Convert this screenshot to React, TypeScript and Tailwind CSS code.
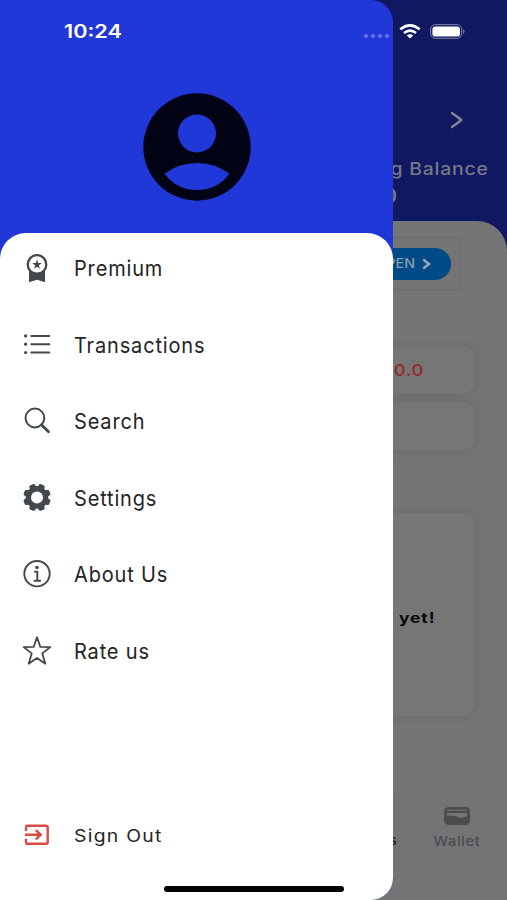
import type { ReactNode } from 'react';

const PremiumIcon = () => (
  <svg viewBox="0 0 30 30" className="w-[30px] h-[30px]">
    <path d="M7 17v12.2l8-2.4 8 2.4V17z" fill="#42484b" />
    <circle cx="15" cy="11.4" r="9.3" fill="#fff" stroke="#42484b" strokeWidth="2.3" />
    <path d="M15 6.6l1.2 3.4 3.6.05-2.9 2.2 1 3.45L15 13.7l-2.9 2 1-3.45-2.9-2.2 3.6-.05z" fill="#42484b" />
  </svg>
);

const ListIcon = () => (
  <svg viewBox="0 0 30 30" className="w-[30px] h-[30px]" fill="#42484b">
    {[5.9, 14.2, 22.5].map((y) => (
      <g key={y}>
        <circle cx="3.6" cy={y} r="1.6" />
        <rect x="8.3" y={y - 1} width="20" height="2" rx="1" />
      </g>
    ))}
  </svg>
);

const SearchIcon = () => (
  <svg viewBox="0 0 30 30" className="w-[30px] h-[30px]" fill="none" stroke="#42484b">
    <circle cx="12.9" cy="12" r="9.4" strokeWidth="2" />
    <path d="M19.5 18.8l7 7" strokeWidth="2.8" strokeLinecap="round" />
  </svg>
);

const GearIcon = () => (
  <svg viewBox="0 0 30 30" className="w-[30px] h-[30px]">
    <g fill="#42484b">
      {[22.5, 67.5, 112.5, 157.5].map((a) => (
        <rect key={a} x="11.8" y=".6" width="6.4" height="27.6" rx="1.9" transform={`rotate(${a} 15 14.4)`} />
      ))}
      <circle cx="15" cy="14.4" r="11.3" />
    </g>
    <circle cx="15" cy="14.4" r="6" fill="#fff" />
  </svg>
);

const InfoIcon = () => (
  <svg viewBox="0 0 30 30" className="w-[30px] h-[30px]" fill="none" stroke="#42484b">
    <circle cx="15" cy="14.7" r="12.7" strokeWidth="1.9" />
    <path d="M12.3 12.7h3v8.7M11.7 21.7h7.2" strokeWidth="1.9" />
    <circle cx="15" cy="8.5" r="1.8" fill="#42484b" stroke="none" />
  </svg>
);

const StarIcon = () => (
  <svg viewBox="0 0 30 30" className="w-[30px] h-[30px]" fill="none" stroke="#42484b" strokeWidth="1.8" strokeLinejoin="round">
    <path d="M15 1.2l3.3 9.7 10 .2-8 6.3 3 10.3L15 22l-8.3 5.7 3-10.3-8-6.3 10-.2z" />
  </svg>
);

const ExitIcon = () => (
  <svg viewBox="0 0 30 30" className="w-[30px] h-[30px]" fill="none" stroke="#db4a43" strokeWidth="2.4">
    <path d="M4 11V7.4q0-1.6 1.6-1.6h18.2q1.9 0 1.9 1.6v14.8q0 1.6-1.9 1.6H5.6Q4 23.8 4 22.2v-3.4" />
    <path d="M3 14.8h15.5M13.8 10.2l5 4.6-5 4.6" />
  </svg>
);

const WalletIcon = () => (
  <svg viewBox="0 0 26 18" className="w-[26px] h-[18px]">
    <rect width="26" height="18" rx="4.5" fill="#4b4c4d" />
    <path d="M3 4q0-1.4 1.5-1.4h17q1.5 0 1.5 1.4z" fill="#68696b" />
    <path d="M3 6h20v3.6q-2.2 0-4 .9-2.2 1-5-.5T9 8.8q-4-.4-6-.3z" fill="#727476" />
  </svg>
);

const menu: { label: string; icon: ReactNode }[] = [
  { label: 'Premium', icon: <PremiumIcon /> },
  { label: 'Transactions', icon: <ListIcon /> },
  { label: 'Search', icon: <SearchIcon /> },
  { label: 'Settings', icon: <GearIcon /> },
  { label: 'About Us', icon: <InfoIcon /> },
  { label: 'Rate us', icon: <StarIcon /> },
];

function StatusBar() {
  return (
    <div className="absolute inset-x-0 top-0 h-[62px] pl-[64px] pr-[41px] flex items-center justify-between text-white">
      <span className="text-[18px] font-semibold origin-left scale-x-[1.2] pt-px">10:24</span>
      <div className="flex items-center">
        <div className="flex gap-[3px] pt-[10px] mr-[10px]">
          {[0, 1, 2, 3].map((i) => <span key={i} className="w-1 h-1 rounded-full bg-[#6574e5]" />)}
        </div>
        <svg viewBox="0 0 22 15" className="w-[22px] h-[15px] mr-[9px]" fill="none" stroke="#fff" strokeWidth="2.6">
          <path d="M1.3 5.3Q11-2.5 20.7 5.3M5 9q6-4.8 12 0" />
          <path d="M7.8 11.6q3.2-2.5 6.4 0L11 14.6z" fill="#fff" stroke="none" />
        </svg>
        <svg viewBox="0 0 36 15" className="w-[36px] h-[15px]">
          <rect x=".7" y=".7" width="31" height="13.6" rx="4.5" fill="none" stroke="#8185ad" strokeWidth="1" />
          <rect x="2.4" y="2.4" width="27.6" height="10.2" rx="3.2" fill="#fff" />
          <path d="M33.2 5q2.6 2.5 0 5z" fill="#8185ad" />
        </svg>
      </div>
    </div>
  );
}

function HomePage() {
  return (
    <div className="h-full flex flex-col bg-[#111862]">
      <div className="h-[221px] shrink-0 flex flex-col items-end pt-[107px] pr-[19px]">
        <svg viewBox="0 0 14 18" className="w-[14px] h-[18px] mt-1 mr-[24px]" fill="none" stroke="#85868f" strokeWidth="2.4" strokeLinecap="round" strokeLinejoin="round">
          <path d="M2 2l9.5 7L2 16" />
        </svg>
        <div className="mt-[28px] -mr-px h-6 leading-6 text-[17px] font-medium tracking-[0.7px] text-[#777986] whitespace-nowrap origin-right scale-x-[1.14]">Opening Balance</div>
        <div className="mt-px mr-[91px] h-7 leading-7 text-[20px] font-semibold text-[#777986]">0.0</div>
      </div>
      <div className="flex-1 flex flex-col rounded-t-[30px] bg-[#757575]">
        <div className="mt-[16px] ml-8 mr-[47px] h-[53px] flex items-center justify-end pr-[8px] border border-[#6b6c70]">
          <div className="h-[32px] w-[110px] rounded-full bg-[#004b87] flex items-center justify-end pr-[20px] gap-[7px] text-[#8a9aaa]">
            <span className="text-[13px] font-medium origin-right scale-x-[1.1]">OPEN</span>
            <svg viewBox="0 0 9 12" className="w-[9px] h-[12px]" fill="none" stroke="#9aa5b0" strokeWidth="2.6">
              <path d="M1.2 1.5L7 6l-5.8 4.5" />
            </svg>
          </div>
        </div>
        <div className="mt-[57px] mx-8 h-[46px] rounded-xl bg-[#767676] shadow-[0_0_8px_3px_rgba(0,0,0,0.06)] flex items-center justify-end pt-px pr-[51px]">
          <span className="text-[15.5px] font-semibold tracking-[0.5px] text-[#91302f] origin-right scale-x-[1.16]">0.0</span>
        </div>
        <div className="mt-[10px] mx-8 h-[47px] rounded-xl bg-[#767676] shadow-[0_0_8px_3px_rgba(0,0,0,0.06)]" />
        <div className="mt-[63px] mx-8 h-[203px] rounded-xl bg-[#767676] shadow-[0_0_8px_3px_rgba(0,0,0,0.06)] flex items-center justify-end pt-[7px] pr-[39px]">
          <span className="text-[14.5px] font-bold tracking-[0.8px] text-[#090909] origin-right scale-x-[1.2]">yet!</span>
        </div>
        <div className="mt-auto h-[108px] bg-[#727476] flex justify-end pr-[29px] text-[13px] font-medium tracking-[0.6px]">
          <div className="flex flex-col justify-start pt-[39px] mr-[39px] text-[#151515]">
            <span className="leading-[18px]">Reports</span>
          </div>
          <div className="flex flex-col items-center pt-[15px] text-[#4b4c4d]">
            <WalletIcon />
            <span className="mt-[7px] leading-[18px] origin-center scale-x-[1.12]">Wallet</span>
          </div>
        </div>
      </div>
    </div>
  );
}

function Drawer() {
  return (
    <div className="absolute inset-y-0 left-0 w-[392.5px] rounded-r-[22px] overflow-hidden bg-[#2138d8] flex flex-col">
      <div className="h-[233px] shrink-0 pl-[143px] pt-[93px]">
        <svg viewBox="0 0 108 108" className="w-[108px] h-[108px]">
          <circle cx="54" cy="54" r="53.7" fill="#020416" />
          <circle cx="54" cy="40.5" r="19" fill="#2138d8" />
          <path d="M21.5 80.8Q36 70 54 70t32.5 10.8Q74 97 54 97T21.5 80.8z" fill="#2138d8" />
        </svg>
      </div>
      <div className="flex-1 rounded-t-[26px] bg-white flex flex-col text-[#242526]">
        {menu.map((item) => (
          <div key={item.label} className="h-[76.5px] shrink-0 flex items-start pt-[20px] pl-[22px]">
            {item.icon}
            <span className="ml-[21.5px] h-[30px] leading-[30px] text-[21.5px] tracking-[0.9px] origin-left scale-x-[0.93]">{item.label}</span>
          </div>
        ))}
        <div className="mt-auto mb-[50px] flex items-center pl-[22px]">
          <ExitIcon />
          <span className="ml-[21.5px] h-[30px] leading-[32px] text-[17px] tracking-[1.1px] origin-left scale-x-[1.14]">Sign Out</span>
        </div>
      </div>
    </div>
  );
}

export default function App() {
  return (
    <div className="relative w-[507px] h-[900px] overflow-hidden font-['Inter',sans-serif]">
      <HomePage />
      <Drawer />
      <StatusBar />
      {/* home indicator */}
      <div className="absolute left-[164px] bottom-[8px] w-[180px] h-[6px] rounded-full bg-black" />
    </div>
  );
}
